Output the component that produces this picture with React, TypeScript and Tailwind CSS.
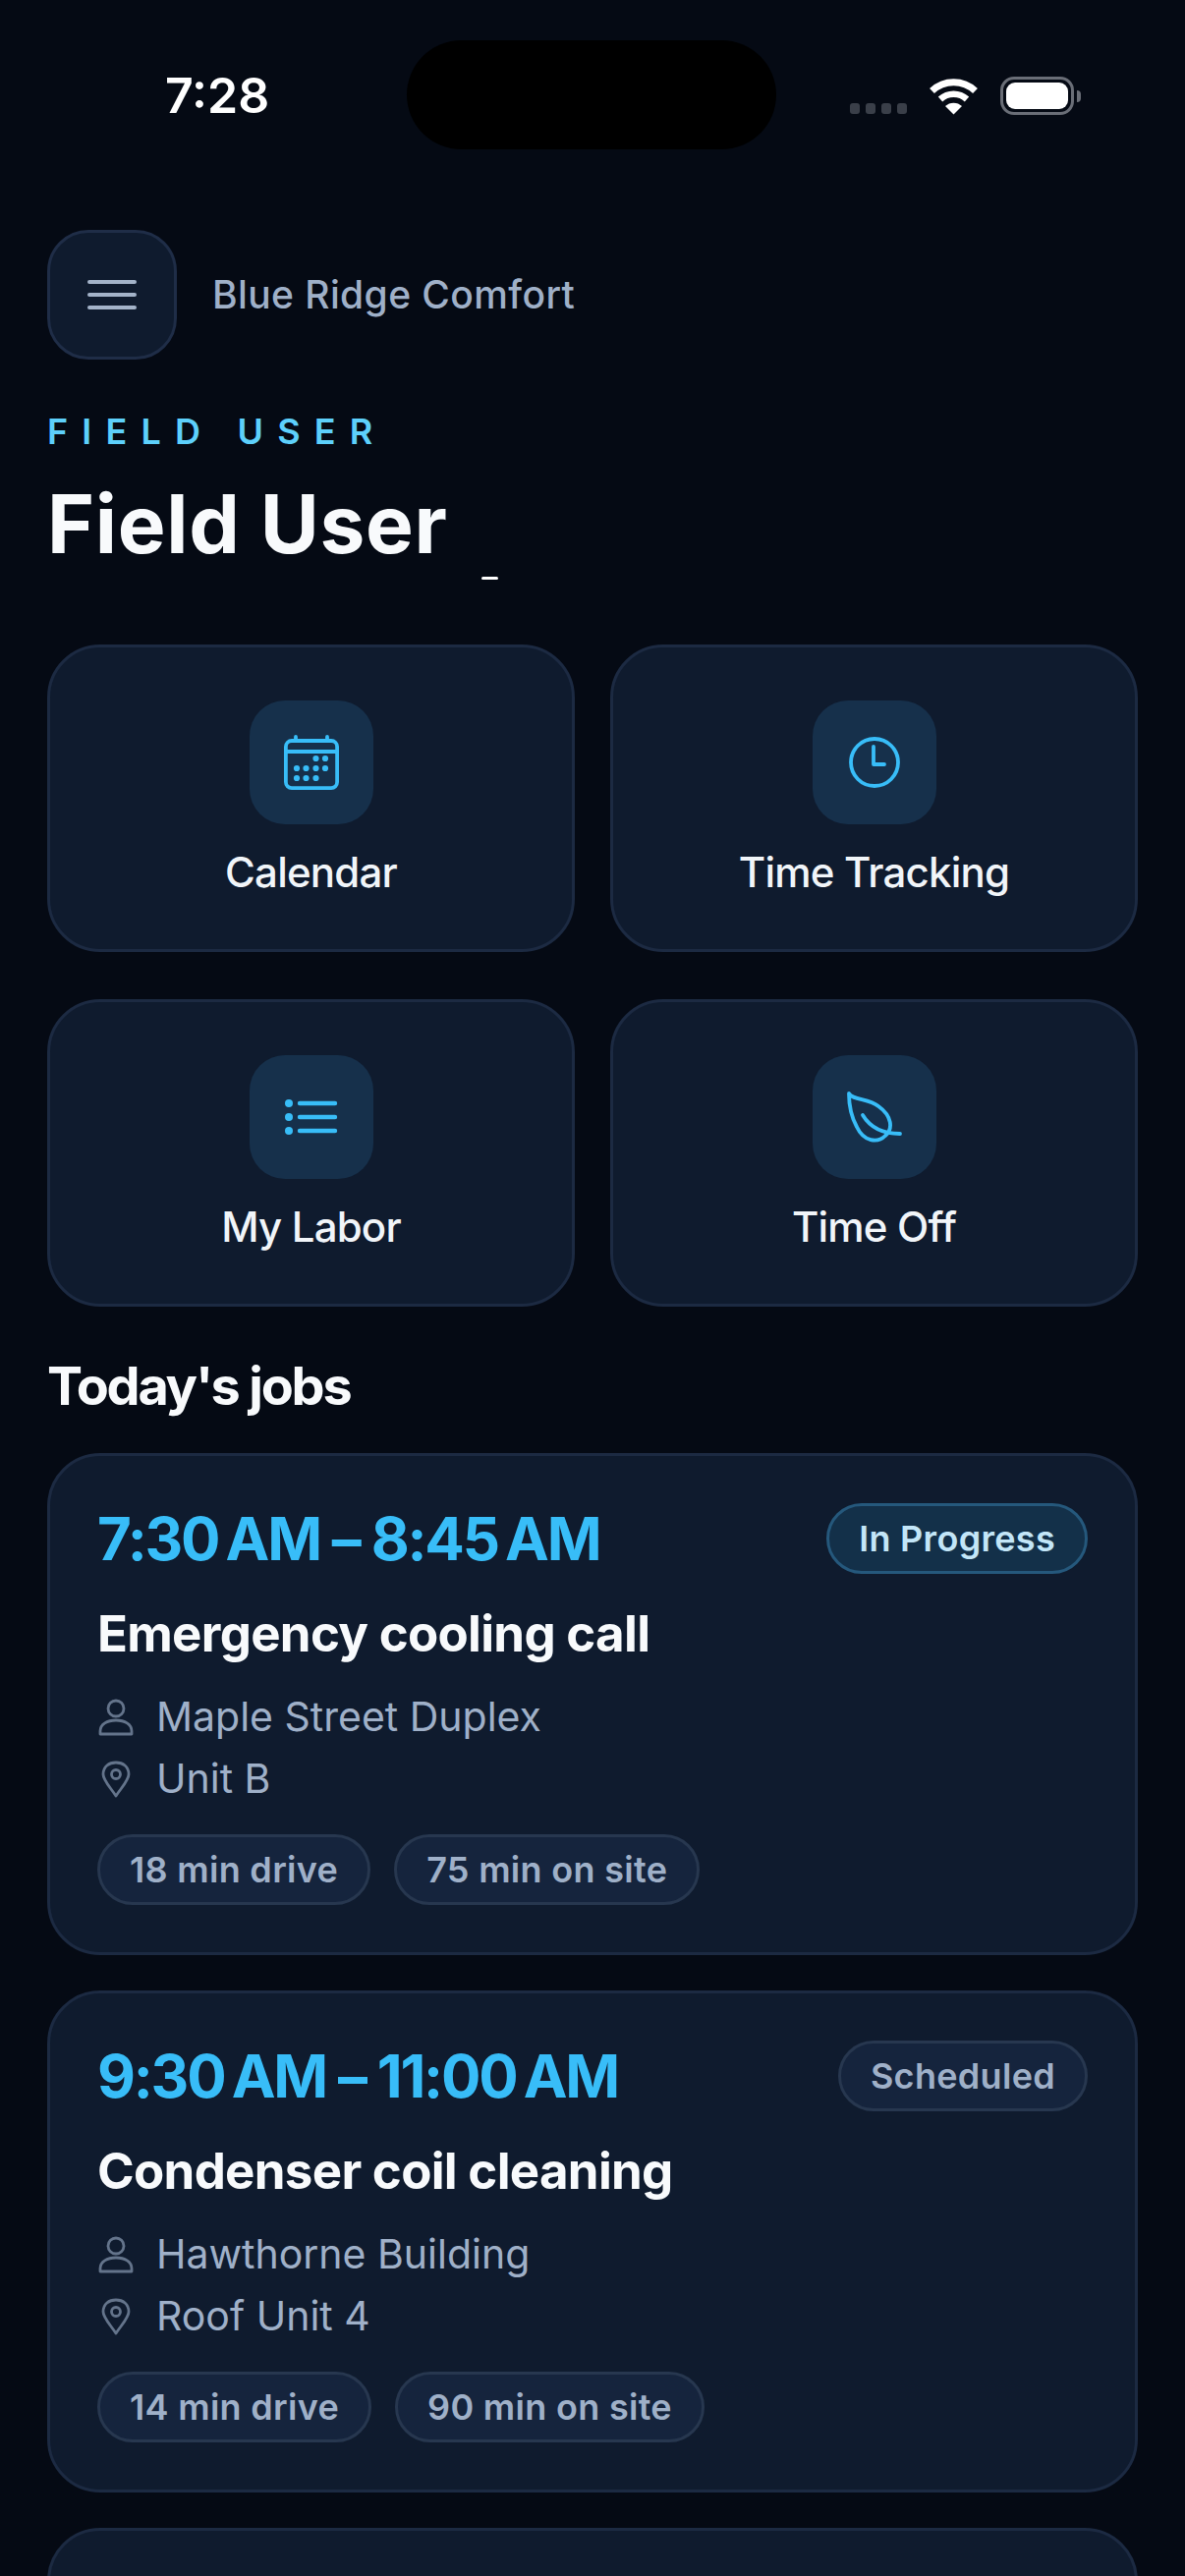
import React from "react";

const F = "font-['Inter',sans-serif]";

function Wifi() {
  return (
    <svg width="51" height="38" viewBox="0 0 51 38" fill="none">
      <path d="M3.5 13.5 A32 32 0 0 1 47.5 13.5" stroke="#fff" strokeWidth="7" />
      <path d="M12 22 A20 20 0 0 1 39 22" stroke="#fff" strokeWidth="6.5" />
      <path d="M25.5 37.5 L17 29 A12.5 12.5 0 0 1 34 29 Z" fill="#fff" />
    </svg>
  );
}

function Battery() {
  return (
    <div className="flex items-center gap-[3px]">
      <div className="w-[75px] h-[39px] rounded-[14px] border-[3px] border-[#6a6e77] p-[3px]">
        <div className="w-full h-full rounded-[9px] bg-white" />
      </div>
      <div className="w-[4px] h-[12px] rounded-r-[4px] bg-[#6a6e77]" />
    </div>
  );
}

function CalendarIcon() {
  const dots = [
    [32.5, 24], [42, 24],
    [13, 34], [22.5, 34], [32.5, 34], [42, 34],
    [13, 44], [22.5, 44], [32.5, 44],
  ];
  return (
    <svg width="56" height="56" viewBox="0 0 56 56" fill="none" stroke="#38bdf8" strokeWidth="3.8" strokeLinecap="round">
      <rect x="1.9" y="6" width="52.2" height="48.1" rx="6" />
      <path d="M1.9 17H54.1M12 1.9V6M44 1.9V6" />
      {dots.map(([x, y]) => (
        <circle key={`${x}-${y}`} cx={x} cy={y} r="3.1" fill="#38bdf8" stroke="none" />
      ))}
    </svg>
  );
}

function ClockIcon() {
  return (
    <svg width="52" height="52" viewBox="0 0 52 52" fill="none" stroke="#38bdf8" strokeWidth="3.8" strokeLinecap="round" strokeLinejoin="round">
      <circle cx="26" cy="26" r="24" />
      <path d="M25 10V28H36" />
    </svg>
  );
}

function ListIcon() {
  return (
    <svg width="54" height="40" viewBox="0 0 54 40" fill="none" stroke="#38bdf8" strokeWidth="4.4" strokeLinecap="round">
      <path d="M15 6H51M15 20H51M15 34H51" />
      <circle cx="4" cy="6" r="4" fill="#38bdf8" stroke="none" />
      <circle cx="4" cy="20" r="4" fill="#38bdf8" stroke="none" />
      <circle cx="4" cy="34" r="4" fill="#38bdf8" stroke="none" />
    </svg>
  );
}

function LeafIcon() {
  return (
    <svg width="56" height="52" viewBox="0 0 56 52" fill="none" stroke="#38bdf8" strokeWidth="3.8" strokeLinecap="round" strokeLinejoin="round">
      <path d="M2 2C6 9 22 7 32 15C46 25 47 38 39 45C31 53 17 51 10 36C4 25 2 13 2 2Z" />
      <path d="M16 24C22 34 33 43 54 43" />
    </svg>
  );
}

function UserIcon() {
  return (
    <svg width="36" height="38" viewBox="0 0 36 38" fill="none" stroke="#64748b" strokeWidth="2.8" strokeLinejoin="round">
      <circle cx="18" cy="10" r="8" />
      <path d="M2 36V33C2 26 9 22 18 22C27 22 34 26 34 33V36Z" />
    </svg>
  );
}

function PinIcon() {
  return (
    <svg width="30" height="38" viewBox="0 0 30 38" fill="none" stroke="#64748b" strokeWidth="2.8" strokeLinejoin="round">
      <path d="M15 36C9 27 2 20 2 14C2 6 8 2 15 2C22 2 28 6 28 14C28 20 21 27 15 36Z" />
      <circle cx="15" cy="14" r="4.5" />
    </svg>
  );
}

function Tile({ icon, label }: { icon: React.ReactNode; label: string }) {
  return (
    <div className="h-[313px] rounded-[54px] border-[3px] border-[#1c2a42] bg-[#0f1b2e] pt-[54px] flex flex-col items-center">
      <div className="w-[126px] h-[126px] rounded-[36px] bg-[#16304b] flex items-center justify-center">{icon}</div>
      <div className="mt-[19px] text-[42px] leading-[60px] font-medium tracking-[-0.8px] text-[#f1f5f9]">{label}</div>
    </div>
  );
}

function Chip({ text }: { text: string }) {
  return (
    <div className="h-[72px] px-[30px] rounded-full border-[3px] border-[#27374f] bg-[#15243d] flex items-center text-[36px] font-semibold tracking-[0.3px] text-[#9fb0c8]">
      {text}
    </div>
  );
}

function Job({
  time, status, active, title, place, unit, chips,
}: {
  time: string; status: string; active?: boolean; title: string; place: string; unit: string; chips: string[];
}) {
  return (
    <div className="h-[511px] shrink-0 rounded-[54px] border-[3px] border-[#1c2a42] bg-[#0f1b2e] px-[48px] pt-[48px]">
      <div className="flex items-center justify-between h-[72px]">
        <div className="text-[60px] leading-[72px] font-bold tracking-[-2.2px] text-[#38bdf8]">{time}</div>
        <div
          className={
            active
              ? "h-[72px] px-[30px] rounded-full border-[3px] border-[#25587c] bg-[#133049] flex items-center text-[36px] font-semibold tracking-[0.3px] text-[#c3e6f8]"
              : "h-[72px] px-[30px] rounded-full border-[3px] border-[#27374f] bg-[#15243d] flex items-center text-[36px] font-semibold tracking-[0.3px] text-[#9fb0c8]"
          }
        >
          {status}
        </div>
      </div>
      <div className="mt-[28px] text-[51px] leading-[66px] font-bold tracking-[-0.7px] text-[#f8fafc]">{title}</div>
      <div className="mt-[21px] flex items-center h-[62px] gap-[22px] text-[41px] text-[#9fb0c8]">
        <div className="w-[38px] flex justify-center"><UserIcon /></div>
        <span>{place}</span>
      </div>
      <div className="flex items-center h-[63px] gap-[22px] text-[41px] text-[#9fb0c8]">
        <div className="w-[38px] flex justify-center"><PinIcon /></div>
        <span>{unit}</span>
      </div>
      <div className="mt-[25px] flex gap-[24px]">
        {chips.map((c) => <Chip key={c} text={c} />)}
      </div>
    </div>
  );
}

export default function App() {
  return (
    <div className={`${F} w-[1206px] h-[2622px] overflow-hidden bg-[#050a14] relative`}>
      {/* Dynamic island */}
      <div className="absolute left-[414px] top-[41px] w-[376px] h-[111px] rounded-[56px] bg-black" />

      {/* Status bar */}
      <div className="h-[234px] pt-[66px] pl-[168px] pr-[106px] flex items-start justify-between">
        <div className="text-[50px] leading-[62px] font-semibold text-white">7:28</div>
        <div className="flex items-center gap-[22px] mt-[12px]">
          <div className="flex gap-[6px] mt-[26px]">
            <div className="w-[10px] h-[11px] rounded-[3px] bg-[#3a3f49]" />
            <div className="w-[10px] h-[11px] rounded-[3px] bg-[#3a3f49]" />
            <div className="w-[10px] h-[11px] rounded-[3px] bg-[#3a3f49]" />
            <div className="w-[10px] h-[11px] rounded-[3px] bg-[#3a3f49]" />
          </div>
          <Wifi />
          <Battery />
        </div>
      </div>

      <div className="px-[48px]">
        {/* Top row */}
        <div className="flex items-center gap-[36px]">
          <div className="w-[132px] h-[132px] rounded-[42px] border-[3px] border-[#1f2d47] bg-[#0f1b2e] flex flex-col items-center justify-center gap-[9px]">
            <div className="w-[50px] h-[4px] rounded-full bg-[#a3b3c9]" />
            <div className="w-[50px] h-[4px] rounded-full bg-[#a3b3c9]" />
            <div className="w-[50px] h-[4px] rounded-full bg-[#a3b3c9]" />
          </div>
          <div className="text-[39px] font-medium tracking-[0.4px] text-[#9fb0c8]">Blue Ridge Comfort</div>
        </div>

        {/* Header */}
        <div className="relative mt-[48px] mb-[78px]">
          <div className="text-[36px] leading-[50px] font-semibold tracking-[14.2px] text-[#5dd0fb]">FIELD USER</div>
          <div className="mt-[25px] mb-[-1px] text-[82px] leading-[90px] font-bold tracking-[0.7px] text-[#f8fafc]">Field User</div>
          <div className="absolute left-[442px] top-[173px] w-[17px] h-[3px] rounded-full bg-white" />
        </div>

        {/* Tiles */}
        <div className="grid grid-cols-2 gap-x-[36px] gap-y-[48px]">
          <Tile icon={<CalendarIcon />} label="Calendar" />
          <Tile icon={<ClockIcon />} label="Time Tracking" />
          <Tile icon={<ListIcon />} label="My Labor" />
          <Tile icon={<LeafIcon />} label="Time Off" />
        </div>

        {/* Jobs */}
        <div className="mt-[48px] mb-[35px] text-[54px] leading-[66px] font-bold tracking-[-2.2px] text-[#f8fafc]">Today's jobs</div>
        <div className="flex flex-col gap-[36px]">
          <Job
            time={"7:30\u2009AM – 8:45\u2009AM"}
            status="In Progress"
            active
            title="Emergency cooling call"
            place="Maple Street Duplex"
            unit="Unit B"
            chips={["18 min drive", "75 min on site"]}
          />
          <Job
            time={"9:30\u2009AM – 11:00\u2009AM"}
            status="Scheduled"
            title="Condenser coil cleaning"
            place="Hawthorne Building"
            unit="Roof Unit 4"
            chips={["14 min drive", "90 min on site"]}
          />
          <div className="h-[300px] shrink-0 rounded-[54px] border-[3px] border-[#1c2a42] bg-[#0f1b2e]" />
        </div>
      </div>
    </div>
  );
}
